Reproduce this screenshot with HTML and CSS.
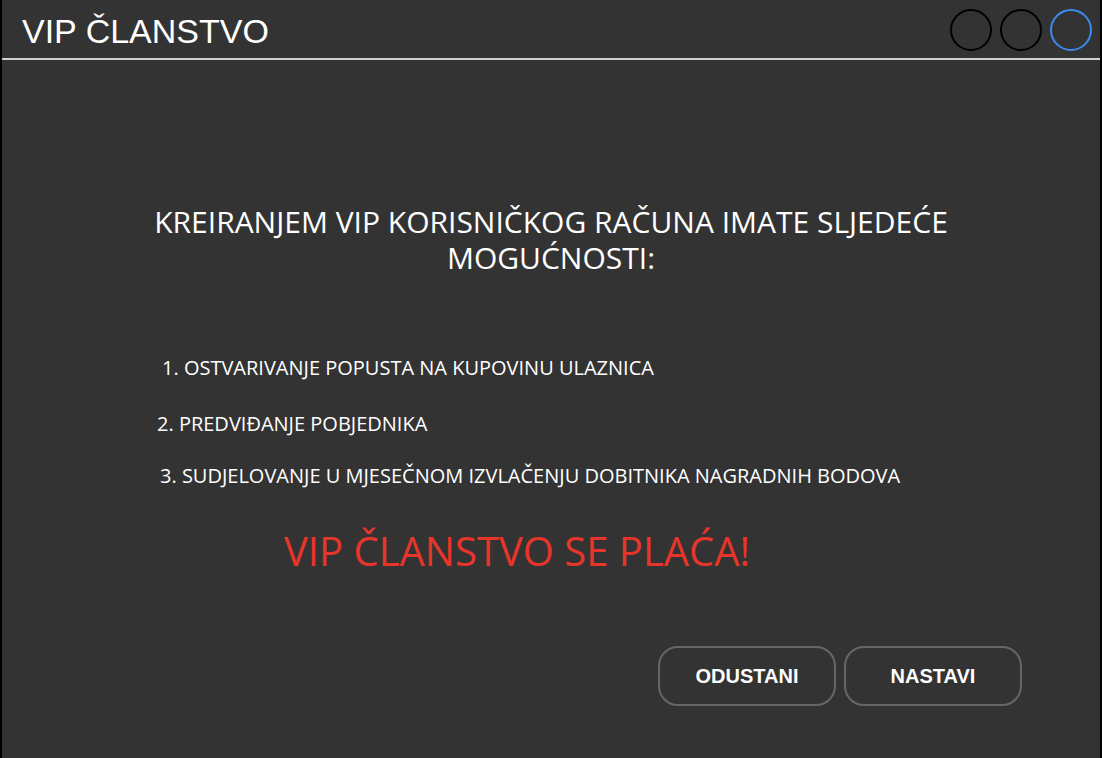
FILE: index.html
```html
<!DOCTYPE html>
<html lang="hr">
<head>
<meta charset="utf-8">
<title>VIP Članstvo</title>
<link rel="stylesheet" href="styles.css">
</head>
<body>
<div class="frame">
  <header class="topbar">
    <h1 class="title">VIP ČLANSTVO</h1>
    <div class="dots">
      <span class="dot"></span>
      <span class="dot"></span>
      <span class="dot dot-active"></span>
    </div>
  </header>
  <main class="content">
    <h2 class="heading">
      <span class="heading-line">KREIRANJEM VIP KORISNIČKOG RAČUNA IMATE SLJEDEĆE</span>
      <span class="heading-line">MOGUĆNOSTI:</span>
    </h2>
    <ol class="perks">
      <li class="perk perk-1">1. OSTVARIVANJE POPUSTA NA KUPOVINU ULAZNICA</li>
      <li class="perk perk-2">2. PREDVIĐANJE POBJEDNIKA</li>
      <li class="perk perk-3">3. SUDJELOVANJE U MJESEČNOM IZVLAČENJU DOBITNIKA NAGRADNIH BODOVA</li>
    </ol>
    <p class="warning">VIP ČLANSTVO SE PLAĆA!</p>
    <div class="actions">
      <button class="btn">ODUSTANI</button>
      <button class="btn">NASTAVI</button>
    </div>
  </main>
</div>
</body>
</html>
```

FILE: styles.css
```css
html, body {
  margin: 0;
  padding: 0;
  background: #000;
}
.frame {
  margin: 0 2px;
  height: 758px;
  background: #333333;
  display: flex;
  flex-direction: column;
}
.topbar {
  height: 58px;
  border-bottom: 2px solid #cfcfcf;
  display: flex;
  align-items: center;
  justify-content: space-between;
  padding: 0 8px 0 20px;
}
.title {
  margin: 0;
  font-family: "Liberation Sans", Arial, sans-serif;
  font-weight: normal;
  font-size: 34px;
  color: #fff;
  line-height: 1;
  padding-top: 3px;
}
.dots {
  display: flex;
  gap: 8px;
  padding-top: 1px;
}
.dot {
  width: 38px;
  height: 38px;
  border: 2px solid #000;
  border-radius: 50%;
}
.dot-active {
  border-color: #3d8af0;
}
.content {
  flex: 1;
  display: flex;
  flex-direction: column;
  font-family: "Open Sans", sans-serif;
  color: #fff;
}
.heading {
  margin: 144px 0 0;
  font-weight: normal;
  font-size: 30px;
  line-height: 36px;
  text-align: center;
  display: flex;
  flex-direction: column;
  align-items: center;
}
.heading-line {
  display: block;
}
.perks {
  list-style: none;
  margin: 80px 0 0;
  padding: 0;
  font-size: 20px;
  line-height: 24px;
}
.perk-1 { margin-left: 160px; }
.perk-2 { margin-left: 155px; margin-top: 32px; }
.perk-3 { margin-left: 158px; margin-top: 28px; }
.warning {
  margin: 39px 0 0 282px;
  font-size: 40px;
  line-height: 48px;
  color: #e8352a;
}
.actions {
  display: flex;
  gap: 8px;
  margin: 71px 0 0 656px;
}
.btn {
  width: 178px;
  height: 60px;
  background: transparent;
  border: 2px solid #666;
  border-radius: 20px;
  color: #fff;
  font-family: "Liberation Sans", Arial, sans-serif;
  font-weight: bold;
  font-size: 20px;
  cursor: pointer;
}
```
